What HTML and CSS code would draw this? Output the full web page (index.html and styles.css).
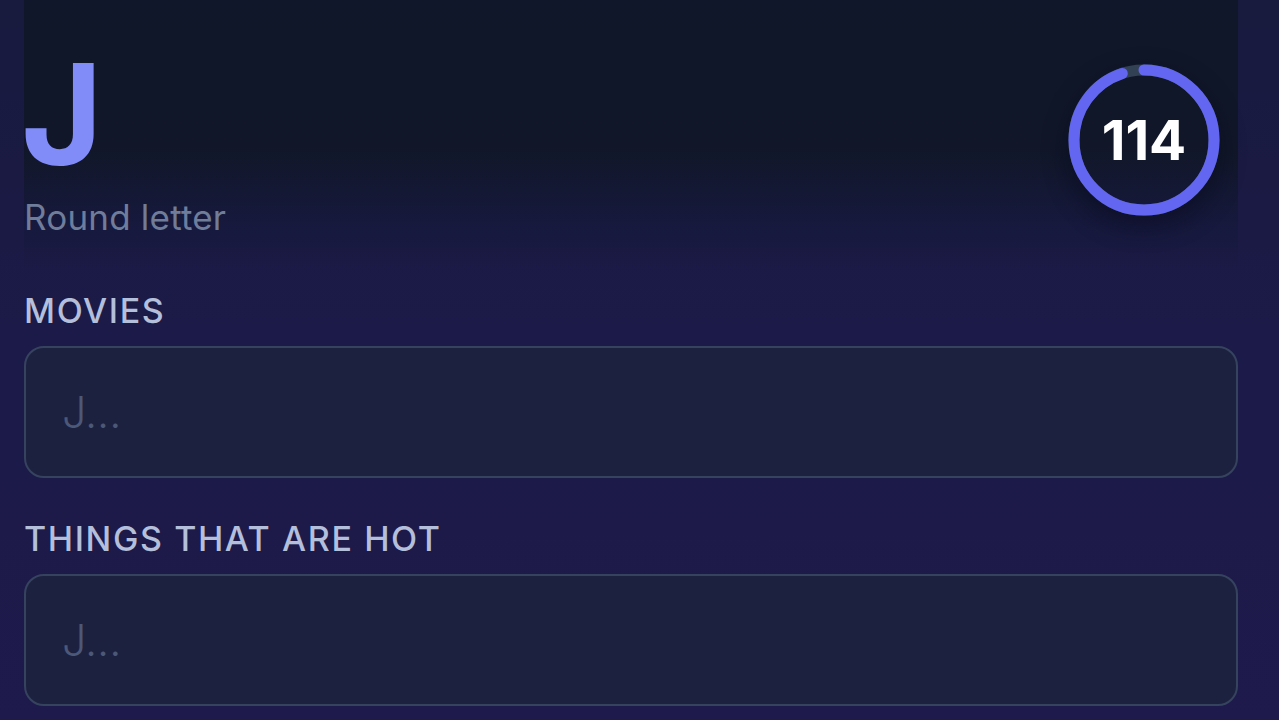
FILE: index.html
```html
<!DOCTYPE html>
<html lang="en">
<head>
<meta charset="utf-8">
<title>Round letter</title>
<link rel="stylesheet" href="styles.css">
</head>
<body>
<div class="screen">
  <header class="hero">
    <div class="hero-text">
      <div class="letter">J</div>
      <div class="subtitle">Round letter</div>
    </div>
    <div class="score">
      <svg class="ring" width="152" height="152" viewBox="0 0 152 152">
        <circle class="ring-track" cx="76" cy="76" r="70"></circle>
        <circle class="ring-progress" cx="76" cy="76" r="70" stroke-dasharray="417 440" transform="rotate(-90 76 76)"></circle>
      </svg>
      <span class="score-value">114</span>
    </div>
  </header>
  <section class="fields">
    <div class="field">
      <label class="field-label" for="movies">MOVIES</label>
      <input class="field-input" id="movies" type="text" placeholder="J...">
    </div>
    <div class="field">
      <label class="field-label" for="hot">THINGS THAT ARE HOT</label>
      <input class="field-input" id="hot" type="text" placeholder="J...">
    </div>
  </section>
</div>
</body>
</html>
```

FILE: styles.css
```css
html, body {
  margin: 0;
  padding: 0;
  height: 100%;
}
body {
  background: linear-gradient(180deg, #181a3e 0%, #1c1a48 45%, #1e1a4c 100%);
  font-family: Inter, "Noto Sans", "Liberation Sans", sans-serif;
  overflow: hidden;
}
.screen {
  padding: 0 41px 0 24px;
}
.hero {
  display: flex;
  justify-content: space-between;
  align-items: flex-start;
  height: 268px;
  box-sizing: border-box;
  padding: 44px 18px 0 0;
  background: linear-gradient(180deg, #10172a 0%, #111729 55%, rgba(20, 24, 56, 0.7) 82%, rgba(28, 26, 72, 0) 100%);
}
.hero-text {
  display: flex;
  flex-direction: column;
}
.letter {
  font-size: 140px;
  line-height: 140px;
  font-weight: 700;
  color: #818cf8;
  letter-spacing: -2px;
  margin-left: -3px;
}
.subtitle {
  margin-top: 13px;
  font-size: 35px;
  line-height: 40px;
  font-weight: 400;
  letter-spacing: 0.2px;
  color: #6f7d9b;
}
.score {
  position: relative;
  width: 152px;
  height: 152px;
  margin-top: 20px;
  border-radius: 50%;
  box-shadow: 0 10px 26px rgba(4, 6, 20, 0.45);
  display: flex;
  align-items: center;
  justify-content: center;
}
.ring {
  position: absolute;
  left: 0;
  top: 0;
}
.ring-track {
  fill: none;
  stroke: #334155;
  stroke-width: 11;
}
.ring-progress {
  fill: none;
  stroke: #6366f1;
  stroke-width: 11;
  stroke-linecap: round;
}
.score-value {
  position: relative;
  font-size: 55px;
  font-weight: 700;
  color: #ffffff;
  letter-spacing: 0;
}
.fields {
  display: flex;
  flex-direction: column;
  gap: 41px;
  padding-top: 23px;
}
.field {
  display: flex;
  flex-direction: column;
  gap: 15px;
}
.field-label {
  font-size: 34px;
  line-height: 40px;
  font-weight: 500;
  letter-spacing: 1.6px;
  color: #b3bfdb;
}
.field-input {
  box-sizing: border-box;
  width: 100%;
  height: 132px;
  margin: 0;
  padding: 0 36px;
  border: 2px solid #36435f;
  border-radius: 20px;
  background: #1d2140;
  font-family: Inter, "Noto Sans", "Liberation Sans", sans-serif;
  font-size: 43px;
  font-weight: 300;
  color: #cbd5e1;
  outline: none;
}
.field-input::placeholder {
  color: #4b5878;
}
```
